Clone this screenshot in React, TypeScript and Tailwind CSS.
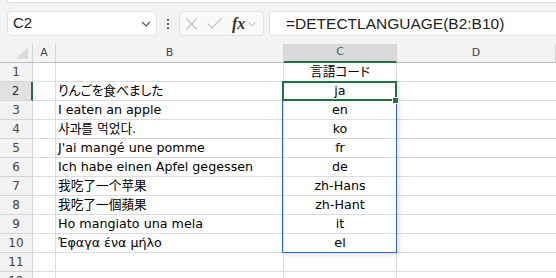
import React from 'react';

type Row = { text: string; code: string; font: string; codeFont?: string };

const base = "font-[family-name:'DejaVu_Sans','Noto_Sans_CJK_JP',sans-serif]";

const rows: Row[] = [
  { text: '', code: '言語コード', font: base, codeFont: "font-[family-name:'DejaVu_Sans','Noto_Sans_CJK_JP',sans-serif] [font-feature-settings:'palt']" },
  { text: 'りんごを食べました', code: 'ja', font: "font-[family-name:'DejaVu_Sans','Noto_Sans_CJK_JP',sans-serif] [font-feature-settings:'palt']" },
  { text: 'I eaten an apple', code: 'en', font: base },
  { text: '사과를 먹었다.', code: 'ko', font: "font-[family-name:'DejaVu_Sans','Noto_Sans_CJK_KR',sans-serif]" },
  { text: "J'ai mangé une pomme", code: 'fr', font: base },
  { text: 'Ich habe einen Apfel gegessen', code: 'de', font: base },
  { text: '我吃了一个苹果', code: 'zh-Hans', font: "font-[family-name:'DejaVu_Sans','Noto_Sans_CJK_SC',sans-serif]" },
  { text: '我吃了一個蘋果', code: 'zh-Hant', font: "font-[family-name:'DejaVu_Sans','Noto_Sans_CJK_TC',sans-serif]" },
  { text: 'Ho mangiato una mela', code: 'it', font: base },
  { text: 'Έφαγα ένα μήλο', code: 'el', font: base },
  { text: '', code: '', font: base },
  { text: '', code: '', font: base },
];

const colLetters = ['A', 'B', 'C', 'D'];

function Chevron({ className }: { className?: string }) {
  return (
    <svg width="10" height="6" viewBox="0 0 10 6" className={className}>
      <path d="M1 1 L5 5 L9 1" fill="none" stroke="currentColor" strokeWidth="1.1" />
    </svg>
  );
}

function Toolbar() {
  return (
    <div className="h-[44px] bg-[#f3f3f3]">
      <div className="h-[3px] ml-[6px] bg-white border-b border-l border-[#d9d9d9] rounded-bl-[4px]" />
      <div className="flex items-center pt-[8px] font-['Liberation_Sans',sans-serif]">
        {/* name box */}
        <div className="ml-[7px] w-[150px] h-[25px] bg-white border border-[#e2e2e2] rounded-[4px] flex items-center justify-between pl-[5px] pr-[5px]">
          <span className="text-[15px] text-[#222]">C2</span>
          <Chevron className="text-[#555]" />
        </div>
        {/* dots */}
        <div className="w-[22px] flex flex-col items-center gap-[2px]">
          <span className="w-[2px] h-[2px] bg-[#444] rounded-full" />
          <span className="w-[2px] h-[2px] bg-[#444] rounded-full" />
          <span className="w-[2px] h-[2px] bg-[#444] rounded-full" />
        </div>
        {/* cancel / enter / fx */}
        <div className="w-[85px] h-[25px] bg-[#f9f9f9] border border-[#e2e2e2] rounded-[4px] flex items-center">
          <svg width="13" height="12" viewBox="0 0 13 12" className="ml-[5px]">
            <path d="M1 0.5 L12 11.5 M12 0.5 L1 11.5" stroke="#c4c4c4" strokeWidth="1.1" fill="none" />
          </svg>
          <svg width="15" height="11" viewBox="0 0 15 11" className="ml-[9px]">
            <path d="M0.5 5.5 L5 10 L14.5 0.5" stroke="#c4c4c4" strokeWidth="1.1" fill="none" />
          </svg>
          <span className="ml-[10px] font-['Liberation_Serif',serif] italic font-bold text-[16px] leading-none text-[#333]">fx</span>
          <Chevron className="ml-[3px] text-[#999] w-[8px]" />
        </div>
        {/* formula */}
        <div className="ml-[5px] flex-1 h-[25px] bg-white border border-r-0 border-[#e2e2e2] rounded-l-[4px] flex items-center pl-[16px]">
          <span className="text-[15.5px] text-[#222]">=DETECTLANGUAGE(B2:B10)</span>
        </div>
      </div>
    </div>
  );
}

export default function App() {
  const grid = 'grid grid-cols-[33px_23px_228px_113px_1fr]';
  return (
    <div className="w-[556px] h-[278px] overflow-hidden bg-white">
      <Toolbar />
      <div className="relative">
        {/* column headers */}
        <div className={`${grid} h-[19px] bg-[#f3f3f3] border-b border-[#bfbfbf] font-['DejaVu_Sans',sans-serif] text-[11px] text-[#444]`}>
          <div className="border-r border-[#d4d4d4] flex items-end justify-end pr-[4px] pb-[3px]">
            <svg width="12" height="12" viewBox="0 0 12 12">
              <path d="M12 0 L12 12 L0 12 Z" fill="#dadada" />
            </svg>
          </div>
          {colLetters.map((c) =>
            c === 'C' ? (
              <div key={c} className="bg-[#d9d9d9] border-r border-[#d4d4d4] border-b-2 border-b-[#1e7145] -mb-px flex items-center justify-center text-[#1e7145]">
                {c}
              </div>
            ) : (
              <div key={c} className="border-r border-[#d4d4d4] flex items-center justify-center">
                {c}
              </div>
            )
          )}
        </div>

        {/* rows */}
        {rows.map((r, i) => {
          const n = i + 1;
          const selected = n === 2;
          return (
            <div key={n} className={`${grid} h-[19px]`}>
              <div
                className={
                  selected
                    ? "bg-[#e1e1e1] border-r-2 border-r-[#1e7145] border-b border-b-[#d4d4d4] flex items-center justify-center font-['DejaVu_Sans',sans-serif] text-[12px] text-[#333]"
                    : "bg-[#f3f3f3] border-r border-b border-[#d4d4d4] flex items-center justify-center font-['DejaVu_Sans',sans-serif] text-[12px] text-[#444]"
                }
              >
                {n}
              </div>
              <div className="border-r border-b border-[#dcdcdc]" />
              <div className={`border-r border-b border-[#dcdcdc] pl-[2px] text-[12.7px] leading-[18px] text-black whitespace-nowrap overflow-hidden ${r.font}`}>
                {r.text}
              </div>
              <div className={`border-r border-b border-[#dcdcdc] text-center text-[12.7px] leading-[18px] text-black whitespace-nowrap ${r.codeFont ?? base}`}>
                {r.code}
              </div>
              <div className="border-b border-[#dcdcdc]" />
            </div>
          );
        })}

        {/* spill range outline */}
        <div className="absolute left-[282px] top-[37px] w-[115px] h-[172px] border border-[#2b67c6] shadow-[2px_2px_5px_rgba(0,0,0,0.12)] pointer-events-none" />
        {/* active cell */}
        <div className="absolute left-[282px] top-[37px] w-[115px] h-[20px] border-2 border-[#1e7145] pointer-events-none" />
        {/* fill handle */}
        <div className="absolute left-[392px] top-[53px] w-[7px] h-[7px] bg-[#1e7145] border border-white pointer-events-none" />
      </div>
    </div>
  );
}
